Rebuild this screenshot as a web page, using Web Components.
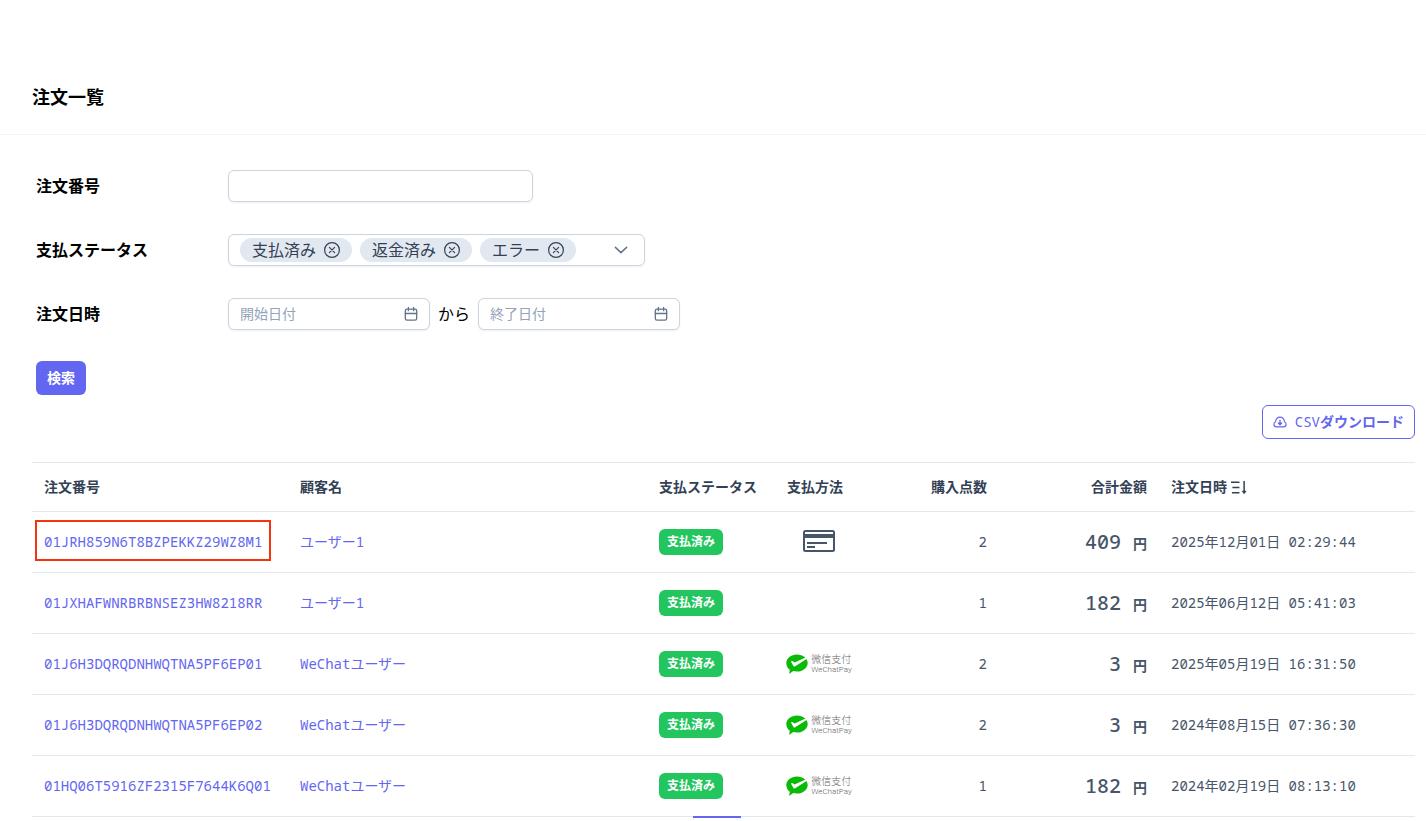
<!DOCTYPE html>
<html lang="ja">
<head>
<meta charset="utf-8">
<meta name="viewport" content="width=device-width, initial-scale=1">
<title>注文一覧</title>
<style>
    body {
        margin: 0;
        background: #fff;
        color: #000;
        --primary: #6366f1;
        --line: #e2e8f0;
        --field: #cbd5e1;
        --text: #475569;
        --sans: Inter, "Noto Sans CJK JP", sans-serif;
        --mono: "Noto Sans Mono", "DejaVu Sans Mono", "Noto Sans CJK JP", monospace;
        font-family: var(--sans);
    }
</style>
</head>
<body>
<order-page></order-page>

<script>
const icons = {
    close: '<circle cx="8" cy="8" r="7.4"/><path d="M5.4 5.4l5.2 5.2M10.6 5.4l-5.2 5.2"/>',
    chevron: '<path stroke-width="1.7" d="M1.6 5l6.400 6 6.400-6"/>',
    calendar: '<g stroke-width="1.5"><rect x="1.500" y="2.500" width="13" height="12.500" rx="2"/><path d="M1.500 7.400h13M5 .6v3.600M11 .6v3.600"/></g>',
    cloud: '<path stroke-width="1.300" d="M4.400 13.600C2.300 13.600 1 12.200 1 10.500 1 9 1.900 8.100 2.900 7.600 3.400 4.600 5.300 2.400 8 2.400s4.600 2.200 5.100 5.200c1 .5 1.900 1.400 1.900 2.900 0 1.700-1.300 3.100-3.400 3.100z"/><path stroke-width="1.500" d="M8 6v5M6 9.200l2 2 2-2z"/>',
    sort: '<g stroke-width="1.600" stroke-linecap="butt"><path d="M0 2.500h9M1.500 8H9M1 13.500h8M14 1v13"/><path d="M12 12l2 2.400 2-2.400z" fill="currentColor" stroke-width="1"/></g>'
};

class UiIcon extends HTMLElement{
    constructor(){
        super();
        this.attachShadow({mode : 'open'});
    }

    connectedCallback(){
        this.shadowRoot.innerHTML = `
        <style>
        :host {
            display: inline-flex;
            width: 16px;
            height: 16px;
            flex: none;
        }

        svg {
            width: 100%;
            height: 100%;
            overflow: visible;
            fill: none;
            stroke: currentColor;
            stroke-width: 1.2;
            stroke-linecap: round;
            stroke-linejoin: round;
        }
        </style>
        <svg viewBox="0 0 16 16" aria-hidden="true">${icons[this.getAttribute('name')]}</svg>
        `
    }
}

class StatusChip extends HTMLElement{
    constructor(){
        super();
        this.attachShadow({mode : 'open'});
    }

    connectedCallback(){
        this.shadowRoot.innerHTML = `
        <style>
        :host {
            display: flex;
            align-items: center;
            gap: 8px;
            height: 24px;
            padding: 0 12px;
            border-radius: 12px;
            background: #e2e8f0;
            color: #334155;
            font-size: 16px;
            line-height: 24px;
            white-space: nowrap;
        }

        button {
            display: flex;
            padding: 0;
            border: 0;
            background: none;
            color: inherit;
            cursor: pointer;
        }
        </style>
        <slot></slot>
        <button type="button" aria-label="削除"><ui-icon name="close"></ui-icon></button>
        `
        this.shadowRoot.querySelector('button').addEventListener('click', () => this.remove());
    }
}

class StatusBadge extends HTMLElement{
    constructor(){
        super();
        this.attachShadow({mode : 'open'});
    }

    connectedCallback(){
        this.shadowRoot.innerHTML = `
        <style>
        :host {
            display: block;
            width: max-content;
            padding: 0 8px;
            border-radius: 6px;
            background: #22c55e;
            color: #fff;
            font: 700 12px/26px var(--sans);
        }
        </style>
        <slot></slot>
        `
    }
}

class PayMethod extends HTMLElement{
    constructor(){
        super();
        this.attachShadow({mode : 'open'});
    }

    connectedCallback(){
        this.shadowRoot.innerHTML = `
        <style>${this.getStyle()}</style>
        ${this.getMark()}
        `
    }

    getMark(){
        const type = this.getAttribute('type');
        if (type === 'card') {
            return `
            <svg class="card" viewBox="0 0 32 24" aria-hidden="true">
                <rect x="1" y="1" width="30" height="20" rx="1.5" fill="none" stroke="currentColor" stroke-width="2"/>
                <path d="M1 4h30v4H1zM4 12h20v2H4zM4 16h8v2H4z" fill="currentColor"/>
            </svg>`
        }
        if (type === 'wechat') {
            return `
            <svg class="bubble" viewBox="0 0 22 20" aria-hidden="true">
                <path d="M11 .5C17 .5 21.7 4.3 21.7 9S17 17.6 11 17.6c-1.3 0-2.6-.2-3.8-.5L3.8 19.6c-.4.2-.7 0-.6-.4l.6-3.500C1.5 14.2.3 11.7.3 9 .3 4.3 5 .5 11 .5z" fill="#09bb07"/>
                <path d="M5.3 7.2c.3-.4.7-.4 1.1-.1l2.2 1.500 11-5 .9 1.300L9.2 12.2c-.6.5-1.300.4-1.700-.2L5.2 8.1c-.2-.3-.1-.6.1-.9z" fill="#fff"/>
            </svg>
            <div class="name"><span class="zh" lang="zh">微信支付</span><span class="en">WeChatPay</span></div>`
        }
        return ''
    }

    getStyle(){
        return`
        :host {
            display: flex;
            align-items: center;
            justify-content: center;
            width: 64px;
            height: 24px;
        }

        .card {
            width: 32px;
            height: 24px;
            color: #475569;
        }

        .bubble {
            width: 22px;
            height: 20px;
            flex: none;
        }

        .name {
            display: flex;
            flex-direction: column;
            margin-left: 3px;
            color: #666;
            font-weight: 300;
            white-space: nowrap;
        }

        .zh {
            font-family: Roboto, "Noto Sans CJK SC", sans-serif;
            font-size: 10px;
            line-height: 11px;
        }

        .en {
            font-family: Roboto, sans-serif;
            font-size: 8px;
            line-height: 10px;
        }
        `
    }
}

class OrderFilter extends HTMLElement{
    constructor(){
        super();
        this.attachShadow({mode : 'open'});
    }

    connectedCallback(){
        this.shadowRoot.innerHTML = `
        <style>${this.getStyle()}</style>
        <form>
            <div class="row">
                <label for="number">注文番号</label>
                <input id="number" class="field" type="text">
            </div>
            <div class="row">
                <label for="status">支払ステータス</label>
                <div class="field multi">
                    <status-chip>支払済み</status-chip>
                    <status-chip>返金済み</status-chip>
                    <status-chip>エラー</status-chip>
                    <div class="drop">
                        <select id="status"><option></option></select>
                        <ui-icon name="chevron"></ui-icon>
                    </div>
                </div>
            </div>
            <div class="row">
                <label for="from">注文日時</label>
                <div class="range">
                    <div class="field date">
                        <input id="from" type="text" placeholder="開始日付">
                        <ui-icon name="calendar"></ui-icon>
                    </div>
                    <span>から</span>
                    <div class="field date">
                        <input type="text" placeholder="終了日付" aria-label="終了日付">
                        <ui-icon name="calendar"></ui-icon>
                    </div>
                </div>
            </div>
            <button class="search" type="submit">検索</button>
        </form>
        `
        this.shadowRoot.querySelector('form').addEventListener('submit', (e) => e.preventDefault());
    }

    getStyle(){
        return`
        :host {
            display: block;
            padding: 35px 4px 0;
        }

        form {
            display: flex;
            flex-direction: column;
            align-items: flex-start;
        }

        .row {
            display: grid;
            grid-template-columns: 192px auto;
            align-items: center;
            margin-bottom: 32px;
        }

        label {
            font-size: 16px;
            font-weight: 700;
            line-height: 24px;
        }

        .field {
            box-sizing: border-box;
            height: 32px;
            border: 1px solid var(--field);
            border-radius: 6px;
            background: #fff;
            box-shadow: 0 1px 2px rgba(15, 23, 42, 0.07);
        }

        input.field {
            width: 305px;
            padding: 0 11px;
            font: 16px var(--sans);
        }

        .multi {
            display: flex;
            align-items: center;
            gap: 8px;
            width: 417px;
            padding: 0 16px 0 11px;
        }

        .drop {
            position: relative;
            display: flex;
            flex: 1;
            align-items: center;
            justify-content: flex-end;
            color: #64748b;
        }

        .drop select {
            position: absolute;
            inset: 0;
            width: 100%;
            border: 0;
            background: none;
            appearance: none;
        }

        .drop ui-icon {
            width: 14px;
            height: 14px;
            pointer-events: none;
        }

        .range {
            display: flex;
            align-items: center;
            gap: 8px;
            font-size: 16px;
            line-height: 24px;
        }

        .date {
            display: flex;
            align-items: center;
            width: 202px;
            padding: 0 11px;
            color: #64748b;
        }

        .date input {
            flex: 1;
            min-width: 0;
            padding: 0;
            border: 0;
            outline: 0;
            background: none;
            font: 14px/20px var(--sans);
        }

        .date input::placeholder {
            color: #94a3b8;
        }

        .date ui-icon {
            width: 14px;
            height: 14px;
        }

        .search {
            height: 34px;
            margin-top: -1px;
            padding: 0 11px;
            border: 0;
            border-radius: 6px;
            background: var(--primary);
            color: #fff;
            font: 700 14px/20px var(--sans);
            cursor: pointer;
        }
        `
    }
}

class CsvButton extends HTMLElement{
    constructor(){
        super();
        this.attachShadow({mode : 'open'});
    }

    connectedCallback(){
        this.shadowRoot.innerHTML = `
        <style>
        :host {
            display: flex;
            justify-content: flex-end;
            padding: 10px 0 23px;
        }

        button {
            display: flex;
            align-items: center;
            gap: 8px;
            height: 34px;
            padding: 0 10px;
            border: 1px solid var(--primary);
            border-radius: 6px;
            background: #fff;
            color: var(--primary);
            font: 14px/20px var(--mono);
            cursor: pointer;
        }

        b {
            font-family: var(--sans);
        }

        ui-icon {
            width: 14px;
            height: 14px;
        }
        </style>
        <button type="button"><ui-icon name="cloud"></ui-icon><span>CSV<b>ダウンロード</b></span></button>
        `
    }
}

const orders = [
    {id: '01JRH859N6T8BZPEKKZ29WZ8M1', user: 'ユーザー1', pay: 'card', count: 2, total: 409, date: '2025年12月01日 02:29:44', marked: true},
    {id: '01JXHAFWNRBRBNSEZ3HW8218RR', user: 'ユーザー1', pay: '', count: 1, total: 182, date: '2025年06月12日 05:41:03'},
    {id: '01J6H3DQRQDNHWQTNA5PF6EP01', user: 'WeChatユーザー', pay: 'wechat', count: 2, total: 3, date: '2025年05月19日 16:31:50'},
    {id: '01J6H3DQRQDNHWQTNA5PF6EP02', user: 'WeChatユーザー', pay: 'wechat', count: 2, total: 3, date: '2024年08月15日 07:36:30'},
    {id: '01HQ06T5916ZF2315F7644K6Q01', user: 'WeChatユーザー', pay: 'wechat', count: 1, total: 182, date: '2024年02月19日 08:13:10'}
];

class OrderTable extends HTMLElement{
    constructor(){
        super();
        this.attachShadow({mode : 'open'});
    }

    connectedCallback(){
        this.shadowRoot.innerHTML = `
        <style>${this.getStyle()}</style>
        <table>
            <colgroup>
                <col class="w256"><col><col class="w128"><col class="w128"><col class="w96"><col class="w160"><col class="w256">
            </colgroup>
            <thead>
                <tr>
                    <th>注文番号</th>
                    <th>顧客名</th>
                    <th>支払ステータス</th>
                    <th>支払方法</th>
                    <th class="num">購入点数</th>
                    <th class="num">合計金額</th>
                    <th><span class="sort">注文日時<ui-icon name="sort"></ui-icon></span></th>
                </tr>
            </thead>
            <tbody>${orders.map(this.getRow).join('')}</tbody>
        </table>
        <div class="foot"><div class="handle"></div></div>
        `
    }

    getRow(o){
        return `
        <tr>
            <td class="${o.marked ? 'marked' : ''}"><a href="#">${o.id}</a></td>
            <td><a href="#">${o.user}</a></td>
            <td><status-badge>支払済み</status-badge></td>
            <td><pay-method type="${o.pay}"></pay-method></td>
            <td class="num">${o.count}</td>
            <td class="num"><span class="total">${o.total} </span><b>円</b></td>
            <td>${o.date}</td>
        </tr>`
    }

    getStyle(){
        return`
        :host {
            display: block;
        }

        table {
            width: 100%;
            table-layout: fixed;
            border-collapse: separate;
            border-spacing: 0;
            border-top: 1px solid var(--line);
            color: var(--text);
            font: 14px/20px var(--mono);
        }

        .w96 { width: 96px; }
        .w128 { width: 128px; }
        .w160 { width: 160px; }
        .w256 { width: 256px; }

        th, td {
            box-sizing: border-box;
            padding: 0 12px;
            border-bottom: 1px solid var(--line);
            text-align: left;
            white-space: nowrap;
        }

        th {
            height: 49px;
            color: #334155;
            font-family: var(--sans);
            font-weight: 700;
        }

        th:nth-child(3) {
            padding-right: 0;
        }

        td {
            height: 61px;
        }

        .num {
            text-align: right;
        }

        .sort {
            display: flex;
            align-items: center;
            gap: 4px;
        }

        .sort ui-icon {
            width: 15px;
            height: 15px;
        }

        a {
            color: var(--primary);
            text-decoration: none;
        }

        .total {
            font-size: 20px;
            font-weight: 500;
            line-height: 28px;
            white-space: pre;
        }

        b {
            font-family: var(--sans);
        }

        /* red frame drawn over the highlighted order */
        .marked {
            position: relative;
        }

        .marked::after {
            content: "";
            position: absolute;
            inset: 8px 17px 11px 3px;
            border: 2px solid #f5330f;
            pointer-events: none;
        }

        .foot {
            display: flex;
            justify-content: center;
            margin-top: -1px;
            padding-right: 14px;
        }

        .handle {
            width: 48px;
            height: 2px;
            z-index: 1;
            background: var(--primary);
        }
        `
    }
}

class OrderPage extends HTMLElement{
    constructor(){
        super();
        this.attachShadow({mode : 'open'});
    }

    connectedCallback(){
        this.shadowRoot.innerHTML = `
        <style>
        :host {
            display: block;
        }

        header {
            padding: 84px 32px 22px;
            border-bottom: 1px solid #f1f5f9;
        }

        h1 {
            margin: 0;
            font-size: 18px;
            font-weight: 700;
            line-height: 28px;
        }

        main {
            padding: 0 11px 0 32px;
        }
        </style>
        <header><h1>注文一覧</h1></header>
        <main>
            <order-filter></order-filter>
            <csv-button></csv-button>
            <order-table></order-table>
        </main>
        `
    }
}

customElements.define('ui-icon', UiIcon);
customElements.define('status-chip', StatusChip);
customElements.define('status-badge', StatusBadge);
customElements.define('pay-method', PayMethod);
customElements.define('order-filter', OrderFilter);
customElements.define('csv-button', CsvButton);
customElements.define('order-table', OrderTable);
customElements.define('order-page', OrderPage);
</script>
</body>
</html>
